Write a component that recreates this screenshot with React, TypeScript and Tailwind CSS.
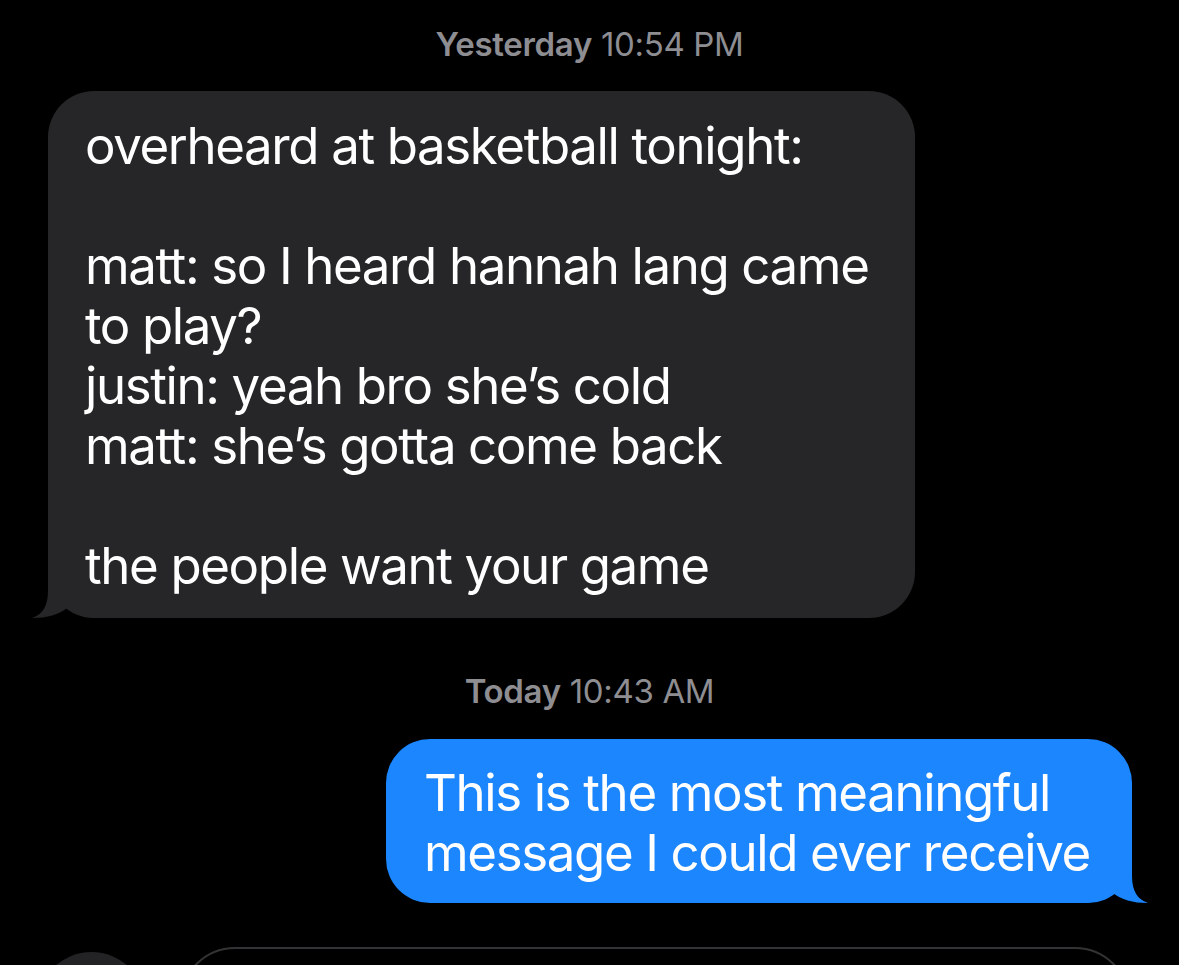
const grayLines = [
  "overheard at basketball tonight:",
  "",
  "matt: so I heard hannah lang came",
  "to play?",
  "justin: yeah bro she\u2019s cold",
  "matt: she\u2019s gotta come back",
  "",
  "the people want your game",
];

const blueLines = ["This is the most meaningful", "message I could ever receive"];

const Tail = ({ color, flip }: { color: string; flip?: boolean }) => (
  <svg
    width="70"
    height="60"
    viewBox="0 0 70 60"
    className={
      flip
        ? "absolute -right-[16px] bottom-0 -scale-x-100"
        : "absolute -left-[16px] bottom-0"
    }
  >
    <path
      d="M16 3 L16 33 Q16 55 0 60 Q23 60 35 50 Q48 60 68 60 L68 3 Z"
      fill={color}
    />
  </svg>
);

const Stamp = ({ day, time }: { day: string; time: string }) => (
  <div className="text-center text-[33px] leading-[40px] text-[#8d8d92] tracking-[-0.01em]">
    <span className="font-semibold">{day}</span> <span>{time}</span>
  </div>
);

const Lines = ({ lines }: { lines: string[] }) => (
  <>
    {lines.map((l, i) => (
      <div key={i} className="h-[60px] whitespace-nowrap">
        {l || "\u00a0"}
      </div>
    ))}
  </>
);

export default function App() {
  return (
    <div
      className="w-full h-[965px] bg-black overflow-hidden flex flex-col"
      style={{ fontFamily: "Inter, 'Noto Sans', sans-serif" }}
    >
      <div className="h-[3px] bg-[#202022]" />

      <div className="mt-[24px]">
        <Stamp day="Yesterday" time="10:54 PM" />
      </div>

      <div className="mt-[27px] ml-[48px] relative w-[867px]">
        <Tail color="#262628" />
        <div className="relative bg-[#262628] rounded-[46px] pl-[37px] pt-[25px] pb-[22px] text-white text-[51px] leading-[60px] tracking-[-0.027em]">
          <Lines lines={grayLines} />
        </div>
      </div>

      <div className="mt-[53px]">
        <Stamp day="Today" time="10:43 AM" />
      </div>

      <div className="mt-[28px] ml-[386px] relative w-[746px]">
        <Tail color="#1b86fe" flip />
        <div className="relative bg-[#1b86fe] rounded-[44px] pl-[38px] pt-[24px] pb-[20px] text-white text-[51px] leading-[60px] tracking-[-0.027em]">
          <Lines lines={blueLines} />
        </div>
      </div>

      <div className="mt-[44px] flex items-start">
        <div className="mt-[5px] ml-[37px] w-[109px] h-[109px] shrink-0 rounded-full bg-[#232325]" />
        <div className="ml-[34px] w-[950px] h-[110px] shrink-0 rounded-[55px] border-2 border-[#333335]" />
      </div>
    </div>
  );
}
